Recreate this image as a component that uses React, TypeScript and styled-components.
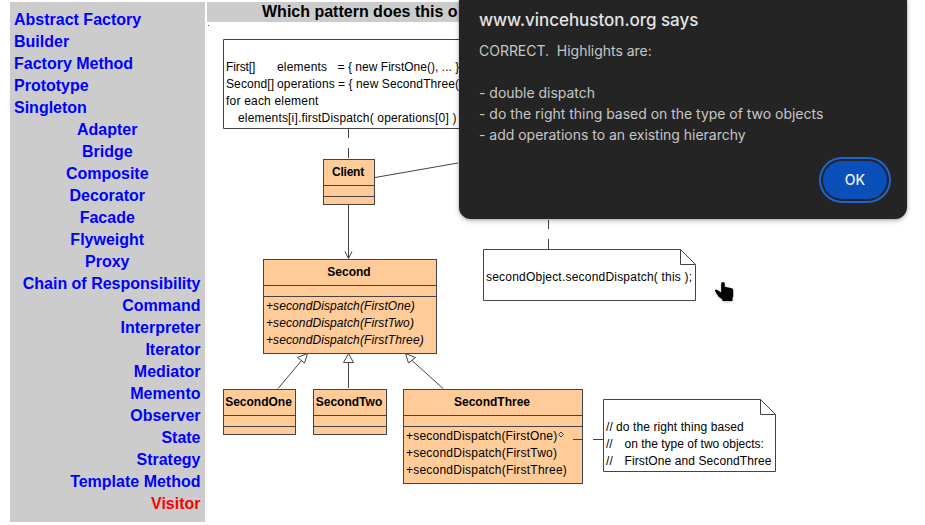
import React from "react";
import styled, { createGlobalStyle } from "styled-components";

const GlobalStyle = createGlobalStyle`
  html, body { margin: 0; background: #fff; overflow: hidden; }
  * { box-sizing: border-box; }
`;

const Page = styled.div`
  position: relative;
  display: flex;
  gap: 2px;
  width: 925px;
  height: 525px;
  padding: 2px 0 3px 10px;
  overflow: hidden;
  font-family: "Liberation Sans", Arial, sans-serif;
`;

const Sidebar = styled.nav`
  flex: none;
  width: 195px;
  height: 520px;
  padding: 7px 4.5px 0 4px;
  background: #ccc;
`;

const PatternGroup = styled.div<{ $align: "left" | "center" | "right" }>`
  display: flex;
  flex-direction: column;
  text-align: ${(p) => p.$align};
`;

const PatternLink = styled.a<{ $active?: boolean }>`
  font-size: 16px;
  font-weight: bold;
  line-height: 22px;
  white-space: nowrap;
  color: ${(p) => (p.$active ? "#f00" : "#00f")};
`;

const Main = styled.main`
  flex: 1;
  min-width: 0;
`;

const Question = styled.h1`
  margin: 0;
  width: 570px;
  height: 20px;
  padding-left: 55px;
  background: #ccc;
  color: #000;
  font-size: 16px;
  font-weight: bold;
  line-height: 19px;
  white-space: nowrap;
`;

const Canvas = styled.div`
  position: relative;
  height: 500px;
`;

const Connectors = styled.svg`
  position: absolute;
  left: 0;
  top: 0;
  width: 718px;
  height: 500px;
`;

type Box = { $x: number; $y: number; $w: number; $h: number };

const Node = styled.div<Box>`
  position: absolute;
  left: ${(p) => p.$x - 207}px;
  top: ${(p) => p.$y - 22}px;
  width: ${(p) => p.$w}px;
  height: ${(p) => p.$h}px;
`;

const ClassNode = styled(Node)`
  border: 1px solid #444;
  background: #fc9;
`;

const ClassTitle = styled.div<{ $ls: number }>`
  height: 26px;
  padding-right: 2px;
  border-bottom: 1px solid #444;
  font-size: 12px;
  font-weight: bold;
  line-height: 24px;
  text-align: center;
  white-space: nowrap;
  letter-spacing: ${(p) => p.$ls}px;
`;

const Attributes = styled.div`
  height: 11px;
  border-bottom: 1px solid #444;
`;

const Methods = styled.div<{ $italic?: boolean }>`
  padding: 1px 0 0 2px;
  font-style: ${(p) => (p.$italic ? "italic" : "normal")};
`;

const Line = styled.div<{ $ls?: number; $indent?: number }>`
  display: flex;
  height: 17px;
  padding-left: ${(p) => p.$indent ?? 0}px;
  font-size: 12px;
  line-height: 17px;
  letter-spacing: ${(p) => p.$ls ?? 0}px;
  white-space: pre;
  color: #000;
`;

const Column = styled.span<{ $w?: number; $ls?: number }>`
  flex: none;
  width: ${(p) => (p.$w ? p.$w + "px" : "auto")};
  letter-spacing: ${(p) => (p.$ls === undefined ? "inherit" : p.$ls + "px")};
`;

const NoteNode = styled(Node)<{ $top: number }>`
  padding: ${(p) => p.$top}px 0 0 3px;
`;

const Outline = styled.svg`
  position: absolute;
  inset: 0;
  width: 100%;
  height: 100%;
`;

const Dialog = styled.section`
  position: absolute;
  left: 459px;
  top: -10px;
  width: 448px;
  height: 229px;
  display: flex;
  flex-direction: column;
  padding: 18px 20px 20px;
  border-radius: 12px;
  background: #242424;
  box-shadow: 0 0 2px rgba(0, 0, 0, 0.3), 0 2px 5px rgba(0, 0, 0, 0.25);
  font-family: Inter, sans-serif;
`;

const DialogTitle = styled.div`
  height: 24px;
  font-size: 17px;
  font-weight: 500;
  line-height: 25px;
  letter-spacing: -0.04px;
  color: #e3e3e3;
`;

const Message = styled.div`
  margin-top: 8px;
  font-size: 14px;
  line-height: 21px;
  letter-spacing: -0.02px;
  white-space: pre;
  color: #c7c7c7;
`;

const OkButton = styled.button`
  align-self: flex-end;
  width: 64px;
  height: 38px;
  margin-top: 16px;
  padding: 0;
  border: 0;
  border-radius: 19px;
  outline: 2px solid #1f65d2;
  outline-offset: 2px;
  background: #0b4fbb;
  color: #e8f0fc;
  font: 500 14px/38px Inter, sans-serif;
`;

const Pointer = styled.svg`
  position: absolute;
  left: 713px;
  top: 279px;
  width: 22px;
  height: 24px;
  filter: drop-shadow(0 1px 1px rgba(0, 0, 0, 0.25));
`;

const creational = ["Abstract Factory", "Builder", "Factory Method", "Prototype", "Singleton"];
const structural = ["Adapter", "Bridge", "Composite", "Decorator", "Facade", "Flyweight", "Proxy"];
const behavioral = [
  "Chain of Responsibility", "Command", "Interpreter", "Iterator", "Mediator", "Memento",
  "Observer", "State", "Strategy", "Template Method", "Visitor",
];

function PatternList({ items, align }: { items: string[]; align: "left" | "center" | "right" }) {
  return (
    <PatternGroup $align={align}>
      {items.map((name) => (
        <PatternLink key={name} $active={name === "Visitor"}>{name}</PatternLink>
      ))}
    </PatternGroup>
  );
}

type ClassProps = {
  x: number; y: number; w: number; h: number; name: string; ls?: number;
  methods?: [string, number][]; italic?: boolean;
};

function UmlClass({ x, y, w, h, name, ls = 0, methods = [], italic }: ClassProps) {
  return (
    <ClassNode $x={x} $y={y} $w={w} $h={h}>
      <ClassTitle $ls={ls}>{name}</ClassTitle>
      <Attributes />
      <Methods $italic={italic}>
        {methods.map(([text, spacing]) => <Line key={text} $ls={spacing}>{text}</Line>)}
      </Methods>
    </ClassNode>
  );
}

type NoteProps = { x: number; y: number; w: number; h: number; top: number; children: React.ReactNode };

function Note({ x, y, w, h, top, children }: NoteProps) {
  return (
    <NoteNode $x={x} $y={y} $w={w} $h={h} $top={top}>
      <Outline fill="none" stroke="#444">
        <path d={`M.5 .5H${w - 15.5}L${w - 0.5} 15.5V${h - 0.5}H.5Z M${w - 15.5} .5V15.5H${w - 0.5}`} />
      </Outline>
      {children}
    </NoteNode>
  );
}

export default function App() {
  return (
    <>
      <GlobalStyle />
      <Page>
        <Sidebar>
          <PatternList items={creational} align="left" />
          <PatternList items={structural} align="center" />
          <PatternList items={behavioral} align="right" />
        </Sidebar>
        <Main>
          <Question>Which pattern does this o</Question>
          <Canvas>
            <Note x={223} y={39} w={260} h={90} top={20}>
              <Line $ls={0.1}>
                <Column $w={51} $ls={-0.1}>First[]</Column>
                <Column $w={60.5} $ls={0.2}>elements</Column>
                <Column $ls={0.03}>{"= { new FirstOne(), ... }"}</Column>
              </Line>
              <Line $ls={0.1}>
                <Column $w={51}>Second[]</Column>
                <Column $w={61} $ls={0.2}>operations</Column>
                <Column>{"= { new SecondThree("}</Column>
              </Line>
              <Line $ls={0.2}>for each element</Line>
              <Line $ls={0.17} $indent={12}>elements[i].firstDispatch( operations[0] )</Line>
            </Note>
            <UmlClass x={323} y={159} w={52} h={46} name="Client" ls={-0.25} />
            <UmlClass
              x={263} y={259} w={174} h={95} name="Second" italic
              methods={[["+secondDispatch(FirstOne)", 0.1], ["+secondDispatch(FirstTwo)", 0.1], ["+secondDispatch(FirstThree)", 0.1]]}
            />
            <UmlClass x={223} y={389} w={73} h={46} name="SecondOne" />
            <UmlClass x={313} y={389} w={74} h={46} name="SecondTwo" />
            <UmlClass
              x={403} y={389} w={180} h={95} name="SecondThree"
              methods={[["+secondDispatch(FirstOne)", 0.2], ["+secondDispatch(FirstTwo)", 0.22], ["+secondDispatch(FirstThree)", 0.22]]}
            />
            <Note x={483} y={249} w={213} h={52} top={20}>
              <Line $ls={0.21}>secondObject.secondDispatch( this );</Line>
            </Note>
            <Note x={603} y={399} w={173} h={73} top={20}>
              <Line $ls={0.1}><Column $w={10}>//</Column>do the right thing based</Line>
              <Line $ls={0}><Column $w={18.5}>//</Column>on the type of two objects:</Line>
              <Line $ls={0.1}><Column $w={18.5}>//</Column>FirstOne and SecondThree</Line>
            </Note>
            <Connectors viewBox="207 22 718 500" fill="none" stroke="#444">
              <path d="M348.5 129V138M348.5 148V158M548.5 220V229M548.5 239V249M573 439.5H583M593 439.5H603" />
              <path d="M375 177.5L458 163" />
              <path d="M348.5 205V258M345 251.5L348.5 258.5L352 251.5" />
              <path d="M278 388.5L302 360M348.5 388V363M443 388.5L411.500 360" />
              <path fill="#fff" d="M307.500 353.500L297.500 357.500L304.500 363Z M348.500 353.500L343.500 362.500H353.500Z M405.500 353.500L408.500 363L415.500 357.500Z" />
              <path d="M561 432L563.5 434.500L561 437L558.5 434.500Z" />
              <path d="M208 25.500H209" stroke="#008000" />
            </Connectors>
          </Canvas>
        </Main>
        <Dialog>
          <DialogTitle>www.vincehuston.org says</DialogTitle>
          <Message>{"CORRECT.  Highlights are:\n\n- double dispatch\n- do the right thing based on the type of two objects\n- add operations to an existing hierarchy"}</Message>
          <OkButton>OK</OkButton>
        </Dialog>
        <Pointer viewBox="713 279 22 24">
          <path fill="#000" d="M721.200 283Q723 280.800 724.800 283V286.800L732 288.200L733.200 289.500V296.500L732.500 298V301H722.500V299.500L718.500 296.500L715 291V289.800H717L721.200 292.500Z" />
        </Pointer>
      </Page>
    </>
  );
}
